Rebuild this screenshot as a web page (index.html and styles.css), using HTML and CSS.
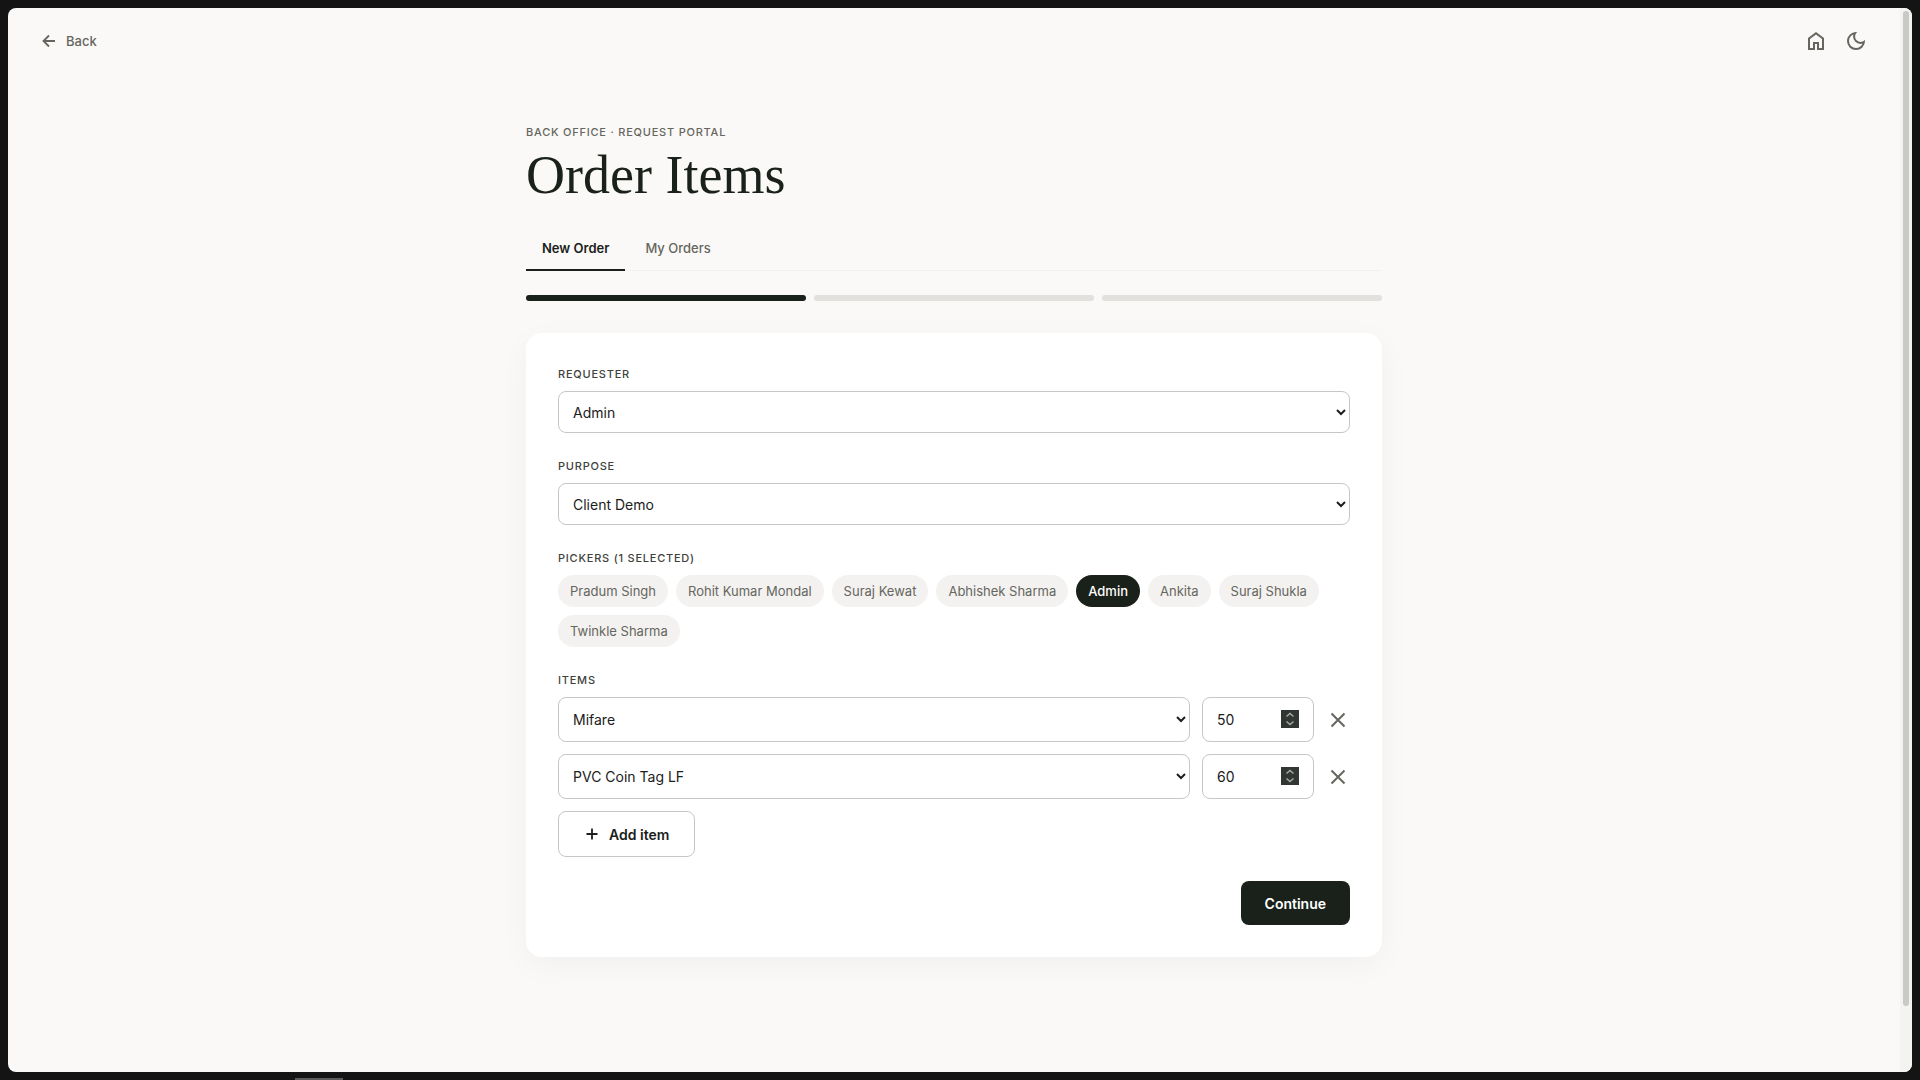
FILE: index.html
```html
<!DOCTYPE html>
<html lang="en">
<head>
    <meta charset="UTF-8">
    <meta name="viewport" content="width=device-width, initial-scale=1.0">
    <title>Order Items</title>
    <link rel="stylesheet" href="styles.css">
</head>
<body>
    <div class="frame">
        <div class="page">
            <!-- Top bar -->
            <header class="topbar">
                <a href="#" class="back-link">
                    <svg width="16" height="16" viewBox="0 0 16 16" fill="none" stroke="currentColor" stroke-width="1.8"><path d="M14 8H3M8 2.500 2.500 8 8 13.500"/></svg>
                    Back
                </a>
                <nav class="topbar-actions">
                    <a href="#" class="icon-button" aria-label="Home">
                        <svg width="24" height="24" viewBox="0 0 24 24" fill="currentColor"><path d="M6 19h3v-6h6v6h3v-9l-6-4.500L6 10v9Zm-2 2V9l8-6 8 6v12h-7v-6h-2v6H4Z"/></svg>
                    </a>
                    <button type="button" class="icon-button" aria-label="Dark mode">
                        <svg width="24" height="24" viewBox="0 0 24 24" fill="currentColor"><path d="M12 21q-3.750 0-6.375-2.625T3 12q0-3.750 2.625-6.375T12 3q.35 0 .69.025t.66.075q-1.025.725-1.638 1.888T11.100 7.500q0 2.250 1.575 3.825T16.500 12.900q1.375 0 2.525-.613T20.900 10.650q.05.325.075.663T21 12q0 3.750-2.625 6.375T12 21Zm0-2q2.200 0 3.950-1.213t2.550-3.162q-.5.125-1 .2t-1 .075q-3.075 0-5.238-2.163T9.100 7.500q0-.5.075-1t.2-1q-1.950.8-3.163 2.550T5 12q0 2.900 2.050 4.950T12 19Z"/></svg>
                    </button>
                </nav>
            </header>

            <!-- Main content -->
            <main class="content">
                <p class="eyebrow">Back Office · Request Portal</p>
                <h1 class="title">Order Items</h1>

                <div class="tabs" role="tablist">
                    <button type="button" class="tab active" role="tab" aria-selected="true">New Order</button>
                    <button type="button" class="tab" role="tab" aria-selected="false">My Orders</button>
                </div>

                <div class="steps">
                    <span class="step done"></span>
                    <span class="step"></span>
                    <span class="step"></span>
                </div>

                <form class="card">
                    <div class="field">
                        <label class="label" for="requester">Requester</label>
                        <select id="requester" class="control">
                            <option>Admin</option>
                        </select>
                    </div>
                    <div class="field">
                        <label class="label" for="purpose">Purpose</label>
                        <select id="purpose" class="control">
                            <option>Client Demo</option>
                        </select>
                    </div>
                    <div class="field" role="group" aria-labelledby="pickers-label">
                        <span class="label" id="pickers-label">Pickers (1 selected)</span>
                        <div class="chips">
                            <button type="button" class="chip">Pradum Singh</button>
                            <button type="button" class="chip">Rohit Kumar Mondal</button>
                            <button type="button" class="chip">Suraj Kewat</button>
                            <button type="button" class="chip">Abhishek Sharma</button>
                            <button type="button" class="chip selected">Admin</button>
                            <button type="button" class="chip">Ankita</button>
                            <button type="button" class="chip">Suraj Shukla</button>
                            <button type="button" class="chip">Twinkle Sharma</button>
                        </div>
                    </div>
                    <div class="field" role="group" aria-labelledby="items-label">
                        <span class="label" id="items-label">Items</span>
                        <div class="items">
                            <div class="item-row">
                                <select class="control" aria-label="Item 1">
                                    <option>Mifare</option>
                                </select>
                                <div class="quantity">
                                    <input type="number" class="control" value="50" aria-label="Quantity 1">
                                    <svg class="spinner" width="18" height="18" viewBox="0 0 18 18" fill="none" stroke="currentColor" stroke-width="1.4"><path d="M5.500 6.500 9 3.500l3.500 3M5.500 11.500l3.500 3 3.500-3"/></svg>
                                </div>
                                <button type="button" class="remove-button" aria-label="Remove item 1">
                                    <svg width="16" height="16" viewBox="0 0 16 16" fill="none" stroke="currentColor" stroke-width="2"><path d="m1.500 1.500 13 13M14.500 1.500l-13 13"/></svg>
                                </button>
                            </div>
                            <div class="item-row">
                                <select class="control" aria-label="Item 2">
                                    <option>PVC Coin Tag LF</option>
                                </select>
                                <div class="quantity">
                                    <input type="number" class="control" value="60" aria-label="Quantity 2">
                                    <svg class="spinner" width="18" height="18" viewBox="0 0 18 18" fill="none" stroke="currentColor" stroke-width="1.4"><path d="M5.500 6.500 9 3.500l3.500 3M5.500 11.500l3.500 3 3.500-3"/></svg>
                                </div>
                                <button type="button" class="remove-button" aria-label="Remove item 2">
                                    <svg width="16" height="16" viewBox="0 0 16 16" fill="none" stroke="currentColor" stroke-width="2"><path d="m1.500 1.500 13 13M14.500 1.500l-13 13"/></svg>
                                </button>
                            </div>
                            <button type="button" class="add-button">
                                <svg width="16" height="16" viewBox="0 0 16 16" fill="none" stroke="currentColor" stroke-width="1.8"><path d="M8 2.500v11M2.500 8h11"/></svg>
                                Add item
                            </button>
                        </div>
                    </div>
                    <div class="form-footer">
                        <button type="button" class="continue-button">Continue</button>
                    </div>
                </form>
            </main>
        </div>
        <div class="scroll-track"><div class="scroll-thumb"></div></div>
    </div>
    <div class="bottom-handle"></div>
</body>
</html>
```
FILE: styles.css
```css
* {
    margin: 0;
    padding: 0;
    box-sizing: border-box;
}

body {
    font-family: Inter, "Liberation Sans", sans-serif;
    font-size: 14px;
    color: #1b211b;
    background: #131413;
    height: 100vh;
    padding: 8px;
    position: relative;
    overflow: hidden;
}

button,
select,
input {
    font: inherit;
    color: inherit;
}

button {
    border: none;
    background: none;
    cursor: pointer;
}

a {
    color: inherit;
    text-decoration: none;
}

svg {
    display: block;
    flex-shrink: 0;
}

.frame {
    display: flex;
    height: 100%;
    background: #faf9f7;
    border-radius: 8px;
    overflow: hidden;
}

.page {
    flex: 1;
    overflow: hidden;
}

/* Scrollbar */
.scroll-track {
    width: 12px;
    padding: 3px;
    background: #f3f3f1;
}

.scroll-thumb {
    height: 94%;
    border-radius: 3px;
    background: #c7cac6;
}

.bottom-handle {
    position: absolute;
    left: 295px;
    bottom: 0;
    width: 48px;
    height: 2px;
    background: #5c5c5c;
}

/* Top bar */
.topbar {
    display: flex;
    align-items: center;
    justify-content: space-between;
    height: 65px;
    padding: 0 24px 0 33px;
    color: #66665e;
}

.back-link {
    display: flex;
    align-items: center;
    gap: 9px;
    font-size: 13px;
    font-weight: 500;
}

.topbar-actions {
    display: flex;
}

.icon-button {
    display: flex;
    align-items: center;
    justify-content: center;
    width: 40px;
    height: 40px;
    color: #66665e;
}

/* Content */
.content {
    max-width: 920px;
    margin: 0 auto;
    padding: 50px 32px;
}

.eyebrow {
    font-size: 11px;
    line-height: 18px;
    font-weight: 500;
    letter-spacing: 0.07em;
    text-transform: uppercase;
    color: #66665e;
}

.title {
    font-family: "Liberation Serif", serif;
    font-size: 54px;
    line-height: 60px;
    font-weight: 400;
    color: #1a211a;
    margin: 4px 0 22px;
}

.tabs {
    display: flex;
    gap: 4px;
    border-bottom: 1px solid #f2f1ef;
}

.tab {
    height: 44px;
    padding: 0 16px;
    margin-bottom: -1px;
    border-bottom: 2px solid transparent;
    font-size: 13px;
    font-weight: 500;
    color: #66665e;
}

.tab.active {
    color: #1a211a;
    border-color: #1a211a;
    font-weight: 600;
}

.steps {
    display: flex;
    gap: 8px;
    margin: 24px 0 32px;
}

.step {
    flex: 1;
    height: 6px;
    border-radius: 3px;
    background: #e2e1de;
}

.step.done {
    background: #1a211a;
}

/* Form */
.card {
    display: flex;
    flex-direction: column;
    gap: 24px;
    padding: 32px;
    border-radius: 16px;
    background: #fff;
    box-shadow: 0 8px 32px rgba(26, 33, 26, 0.04);
}

.field {
    display: flex;
    flex-direction: column;
    gap: 8px;
}

.label {
    font-size: 11px;
    line-height: 18px;
    font-weight: 500;
    letter-spacing: 0.07em;
    text-transform: uppercase;
    color: #40423c;
}

.control {
    width: 100%;
    height: 42px;
    padding: 0 14px;
    border: 1px solid #c6c7c4;
    border-radius: 8px;
    background: #fff;
}

select.control {
    padding: 0 4px 0 10px;
}

.chips {
    display: flex;
    flex-wrap: wrap;
    gap: 8px;
}

.chip {
    height: 32px;
    padding: 0 12px;
    border-radius: 16px;
    background: #f3f2f0;
    color: #66665e;
    font-size: 13px;
}

.chip.selected {
    background: #1a211a;
    color: #fff;
    font-weight: 500;
}

.items {
    display: flex;
    flex-direction: column;
    align-items: flex-start;
    gap: 12px;
}

.item-row {
    display: grid;
    grid-template-columns: 1fr 112px 24px;
    gap: 12px;
    width: 100%;
}

.item-row .control {
    height: 45px;
}

.quantity {
    position: relative;
}

.quantity input {
    appearance: textfield;
}

.quantity input::-webkit-inner-spin-button {
    display: none;
}

.spinner {
    position: absolute;
    top: 13px;
    right: 15px;
    background: #313632;
    color: #a9aca9;
    pointer-events: none;
}

.remove-button {
    display: flex;
    align-items: center;
    justify-content: center;
    color: #66665e;
}

.add-button {
    display: flex;
    align-items: center;
    gap: 9px;
    height: 46px;
    padding: 0 25px;
    border: 1px solid #c6c7c4;
    border-radius: 8px;
    font-weight: 600;
}

.form-footer {
    display: flex;
    justify-content: flex-end;
}

.continue-button {
    height: 44px;
    padding: 0 24px;
    border-radius: 8px;
    background: #1a211a;
    color: #fff;
    font-weight: 600;
}
```
